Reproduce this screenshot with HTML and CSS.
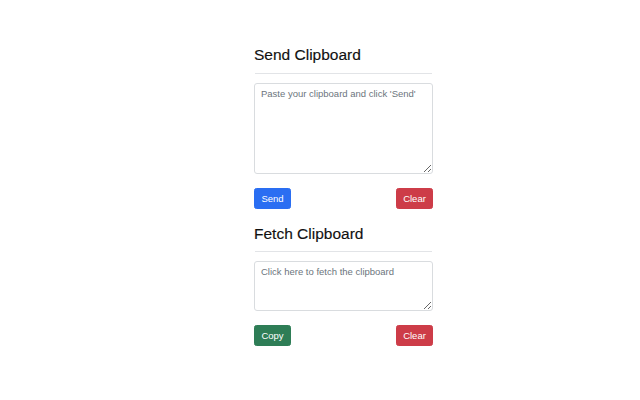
FILE: index.html
```html
<!DOCTYPE html>
<html>
<head>
<meta charset="utf-8">
<link rel="stylesheet" href="styles.css">
</head>
<body>
<div class="panel">
  <section class="block">
    <h2 class="title">Send Clipboard</h2>
    <hr class="rule">
    <textarea class="box box-tall" placeholder="Paste your clipboard and click 'Send'"></textarea>
    <div class="actions">
      <button class="btn btn-blue">Send</button>
      <button class="btn btn-red">Clear</button>
    </div>
  </section>
  <section class="block">
    <h2 class="title">Fetch Clipboard</h2>
    <hr class="rule">
    <textarea class="box box-short" placeholder="Click here to fetch the clipboard"></textarea>
    <div class="actions">
      <button class="btn btn-green">Copy</button>
      <button class="btn btn-red">Clear</button>
    </div>
  </section>
</div>
</body>
</html>
```
FILE: styles.css
```css
html, body {
  margin: 0;
  padding: 0;
  background: #ffffff;
}
body {
  font-family: "Liberation Sans", Arial, sans-serif;
  color: #212529;
}
.panel {
  width: 179px;
  margin-left: 254px;
  padding-top: 46px;
  display: flex;
  flex-direction: column;
  gap: 16px;
}
.block {
  display: flex;
  flex-direction: column;
}
.title {
  margin: 0;
  font-size: 15.5px;
  line-height: 1.2;
  font-weight: normal;
  color: #111;
  -webkit-text-stroke: 0.15px #111;
}
.rule {
  margin: 8px 1px 9px 1px;
  border: 0;
  border-top: 1px solid #e2e4e7;
  height: 0;
}
.box {
  box-sizing: border-box;
  width: 179px;
  margin: 0;
  padding: 3px 6px;
  font-family: "Liberation Sans", Arial, sans-serif;
  font-size: 9.5px;
  line-height: 1.5;
  border: 1px solid #d9dcdf;
  border-radius: 3px;
  color: #333;
  background: #fff;
}
.box::placeholder {
  color: #6c757d;
}
.box-tall {
  height: 91px;
}
.box-short {
  height: 50px;
}
.actions {
  display: flex;
  justify-content: space-between;
  margin-top: 14px;
}
.btn {
  box-sizing: border-box;
  height: 21px;
  width: 37px;
  padding: 0;
  font-family: "Liberation Sans", Arial, sans-serif;
  font-size: 9.5px;
  color: #fff;
  border: 1px solid transparent;
  border-radius: 2.5px;
}
.btn-blue {
  background: #2a6ef2;
  border-color: #2a6ef2;
}
.btn-red {
  background: #cd3c48;
  border-color: #cd3c48;
}
.btn-green {
  background: #2e7d56;
  border-color: #2e7d56;
}
```
